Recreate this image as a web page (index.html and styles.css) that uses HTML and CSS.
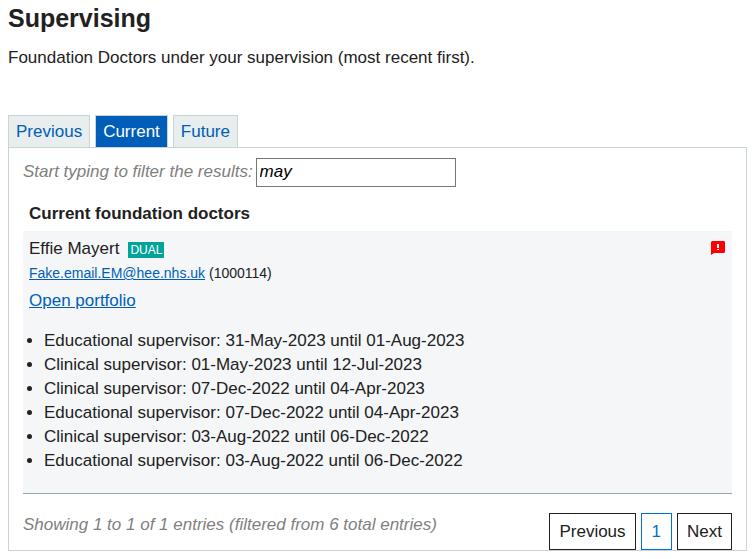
FILE: index.html
```html
<!DOCTYPE html>
<html lang="en">
<head>
<meta charset="utf-8">
<meta name="viewport" content="width=device-width, initial-scale=1">
<title>Supervising</title>
<link rel="stylesheet" href="styles.css">
</head>
<body>
<main>
  <h1>Supervising</h1>
  <p class="intro">Foundation Doctors under your supervision (most recent first).</p>
  <nav class="tabs" aria-label="Foundation doctor lists">
    <a class="tab" href="#previous">Previous</a>
    <a class="tab tab-active" href="#current" aria-current="page">Current</a>
    <a class="tab" href="#future">Future</a>
  </nav>
  <section class="panel" id="current">
    <div class="filter">
      <label for="filter">Start typing to filter the results:</label>
      <input id="filter" type="text" value="may">
    </div>
    <table class="doctors">
      <thead>
        <tr><th scope="col">Current foundation doctors</th></tr>
      </thead>
      <tbody>
        <tr>
          <td>
            <div class="doctor">
              <span>Effie Mayert</span>
              <span class="badge">DUAL</span>
              <svg class="alert" viewBox="0 0 15 15" role="img" aria-label="Alert"><path fill="#f00" d="M1 0h12l1 1v10l-1 1H3l-3 2V1z"/><path fill="#fff" d="M6 3h2v4H6zM6 8h2v1H6z"/></svg>
            </div>
            <div class="contact"><a href="mailto:Fake.email.EM@hee.nhs.uk">Fake.email.EM@hee.nhs.uk</a> (1000114)</div>
            <div class="portfolio"><a href="#portfolio">Open portfolio</a></div>
            <ul class="roles">
              <li>Educational supervisor: 31-May-2023 until 01-Aug-2023</li>
              <li>Clinical supervisor: 01-May-2023 until 12-Jul-2023</li>
              <li>Clinical supervisor: 07-Dec-2022 until 04-Apr-2023</li>
              <li>Educational supervisor: 07-Dec-2022 until 04-Apr-2023</li>
              <li>Clinical supervisor: 03-Aug-2022 until 06-Dec-2022</li>
              <li>Educational supervisor: 03-Aug-2022 until 06-Dec-2022</li>
            </ul>
          </td>
        </tr>
      </tbody>
    </table>
    <div class="footer">
      <p class="summary">Showing 1 to 1 of 1 entries (filtered from 6 total entries)</p>
      <div class="pager">
        <button type="button">Previous</button>
        <button type="button" class="page-current" aria-current="page">1</button>
        <button type="button">Next</button>
      </div>
    </div>
  </section>
</main>
</body>
</html>
```
FILE: styles.css
```css
* { box-sizing: border-box; }

body {
  margin: 0;
  padding: 0 7px 8px 8px;
  background: #fff;
  color: #212121;
  font: 17px/24px "Liberation Sans", Arial, sans-serif;
}

h1 {
  margin: 0;
  padding-top: 2px;
  font-size: 25px;
  line-height: 32px;
}

a { color: #005eb8; }

.intro { margin: 12px 0 45px; }

.tabs {
  display: flex;
  gap: 5px;
}

.tab {
  padding: 4px 7px 3px;
  border: 1px solid #c8d5d5;
  border-bottom: 0;
  background: #e8eded;
  text-decoration: none;
}

.tab-active {
  background: #005eb8;
  color: #fff;
}

.panel {
  padding: 10px 14px 0;
  border: 1px solid #c8d5d5;
}

.filter {
  display: flex;
  align-items: center;
  gap: 3px;
  color: #808080;
  font-style: italic;
}

.filter label {
  padding-bottom: 2px;
}

.filter input {
  width: 200px;
  height: 29px;
  padding: 0 3px 2px;
  border: 1px solid #767676;
  border-radius: 0;
  background: #fff;
  color: #000;
  font: inherit;
}

.doctors {
  width: 100%;
  border-collapse: separate;
  border-spacing: 0;
}

.doctors th {
  padding: 15px 6px 5px;
  text-align: left;
}

.doctors td {
  padding: 6px;
  border-bottom: 1px solid #91a7ad;
  background: #f4f6f8;
}

.doctor {
  display: flex;
  align-items: center;
  gap: 9px;
}

.badge {
  margin-top: 2px;
  padding: 0 2px;
  background: #00a499;
  color: #fff;
  font-size: 12px;
  line-height: 16px;
}

.alert {
  align-self: flex-start;
  width: 15px;
  height: 15px;
  margin-top: 4px;
  margin-left: auto;
}

.contact {
  font-size: 14px;
}

.portfolio { margin-top: 4px; }

.roles {
  margin: 16px 0 14px;
  padding-left: 15px;
}

.footer {
  display: flex;
  justify-content: space-between;
  gap: 16px;
  padding-top: 19px;
}

.summary {
  margin: 0;
  color: #808080;
  font-style: italic;
}

.pager {
  display: flex;
  gap: 5px;
}

.pager button {
  height: 37px;
  padding: 0 9px;
  border: 1px solid #212121;
  border-radius: 0;
  background: #fff;
  color: #212121;
  font: inherit;
}

.pager .page-current {
  padding: 0 10px;
  border-color: #0072ce;
  color: #0072ce;
}
```
